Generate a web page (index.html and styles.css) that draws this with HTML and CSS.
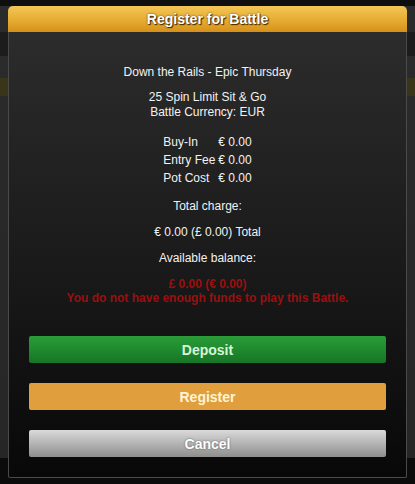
FILE: index.html
```html
<!DOCTYPE html>
<html>
<head>
<meta charset="utf-8">
<link rel="stylesheet" href="styles.css">
</head>
<body>
<div class="backdrop">
  <div class="stripe s1"></div>
  <div class="stripe s2"></div>
  <div class="stripe s3"></div>
</div>
<div class="modal">
  <div class="modal-header">Register for Battle</div>
  <div class="modal-body">
    <p class="line name">Down the Rails - Epic Thursday</p>
    <p class="line info">25 Spin Limit Sit &amp; Go<br>Battle Currency: EUR</p>
    <table class="costs">
      <tr><td>Buy-In</td><td>€ 0.00</td></tr>
      <tr><td>Entry Fee</td><td>€ 0.00</td></tr>
      <tr><td>Pot Cost</td><td>€ 0.00</td></tr>
    </table>
    <p class="line total-label">Total charge:</p>
    <p class="line total">€ 0.00 (£ 0.00) Total</p>
    <p class="line balance-label">Available balance:</p>
    <p class="line warn">£ 0.00 (€ 0.00)<br>You do not have enough funds to play this Battle.</p>
    <div class="buttons">
      <button class="btn deposit">Deposit</button>
      <button class="btn register">Register</button>
      <button class="btn cancel">Cancel</button>
    </div>
  </div>
</div>
</body>
</html>
```
FILE: styles.css
```css
html, body {
  margin: 0;
  padding: 0;
}
body {
  width: 415px;
  height: 484px;
  overflow: hidden;
  background: #262626;
  font-family: "Liberation Sans", Arial, sans-serif;
  position: relative;
}
.backdrop {
  position: absolute;
  inset: 0;
  background: linear-gradient(#0e0e0e 0, #0e0e0e 6px, #2b2b2b 6px, #262626 100%);
}
.stripe {
  position: absolute;
  left: 0;
  right: 0;
}
.s1 { top: 32px; height: 24px; background: #1c1c1c; }
.s2 { top: 78px; height: 18px; background: #3a3418; }
.s3 { top: 458px; height: 26px; background: #0b0b0b; }

.modal {
  position: absolute;
  left: 8px;
  top: 6px;
  width: 397px;
  height: 471px;
  border: 1px solid #4a4a4a;
  border-top: none;
  border-radius: 5px 5px 2px 2px;
  background: linear-gradient(#2e2e2e 0%, #1a1a1a 55%, #080808 100%);
  display: flex;
  flex-direction: column;
}
.modal-header {
  height: 26px;
  line-height: 26px;
  margin: 0 -1px;
  border-radius: 5px 5px 0 0;
  background: linear-gradient(#f3c656 0%, #e5a92e 60%, #d6901a 100%);
  color: #fff;
  font-weight: bold;
  font-size: 14px;
  text-align: center;
  text-shadow: 1px 1px 1px #3a2400, 0 0 2px #5a3a00;
}
.modal-body {
  flex: 1;
  display: flex;
  flex-direction: column;
  align-items: center;
  padding: 33px 20px 0;
  color: #f2f2f2;
  font-size: 12px;
}
.line {
  margin: 0;
  line-height: 15px;
  text-align: center;
}
.info { margin-top: 10px; }
.costs {
  margin-top: 13px;
  border-collapse: collapse;
  font-size: 12px;
  color: #f2f2f2;
}
.costs td {
  padding: 0;
  height: 18px;
  line-height: 18px;
  white-space: nowrap;
}
.costs td:first-child { padding-right: 3px; }
.total-label { margin-top: 12px; }
.total { margin-top: 11px; }
.balance-label { margin-top: 11px; }
.warn {
  margin-top: 11px;
  line-height: 14px;
  color: #9a1010;
  font-weight: bold;
}
.buttons {
  margin-top: 31px;
  display: flex;
  flex-direction: column;
  gap: 20px;
  align-self: stretch;
}
.btn {
  display: block;
  width: 100%;
  height: 27px;
  border: none;
  border-radius: 2px;
  font-family: "Liberation Sans", Arial, sans-serif;
  font-weight: bold;
  font-size: 14px;
  padding: 0;
}
.deposit {
  background: linear-gradient(#2a9c38 0%, #1f8a2e 50%, #187426 100%);
  color: #d8f5d8;
}
.register {
  background: #e09f3c;
  color: #fff4d6;
}
.cancel {
  background: linear-gradient(#dadada 0%, #b4b4b4 50%, #8e8e8e 100%);
  color: #fff;
  text-shadow: 0 0 2px #555;
}
```
